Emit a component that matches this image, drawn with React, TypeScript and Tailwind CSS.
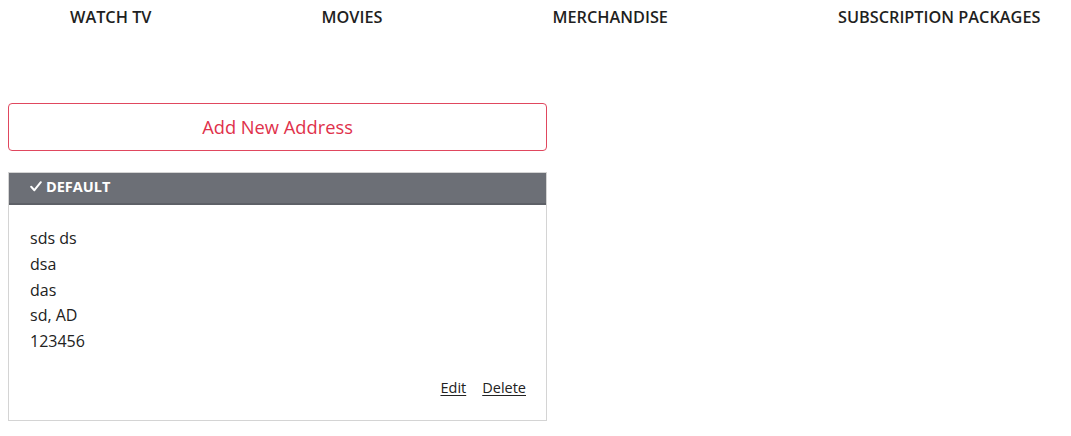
import React from "react";

export default function App() {
  const font = { fontFamily: '"Open Sans", "Noto Sans", sans-serif' };
  return (
    <div className="w-[1071px] h-[436px] bg-white text-[#222]" style={font}>
      <nav className="flex items-center h-[35px] pl-[70px] gap-[170px] text-[16.3px] font-semibold text-[#1f1f22]">
        <span>WATCH TV</span>
        <span>MOVIES</span>
        <span>MERCHANDISE</span>
        <span>SUBSCRIPTION PACKAGES</span>
      </nav>
      <div className="ml-[8px] w-[539px] mt-[68px]">
        <button className="w-full h-[48px] border border-[#e0475e] rounded-[4px] text-[#e0314b] text-[18.3px] flex items-center justify-center">
          Add New Address
        </button>
        <div className="mt-[21px] border border-[#d4d4d4] h-[249px] flex flex-col">
          <div className="h-[32px] bg-[#6c6f76] border-b-2 border-[#5d6067] text-white text-[14.5px] font-bold flex items-center pl-[21px] pb-[2px]">
            <svg width="12" height="11" viewBox="0 0 12 11" className="mr-[4px] mb-[1px]">
              <path d="M1.2 5.8 L4.4 9.2 L10.8 1.2" fill="none" stroke="white" strokeWidth="2" strokeLinecap="round" strokeLinejoin="round" />
            </svg>
            DEFAULT
          </div>
          <div className="pl-[21px] pt-[21px] text-[16px] leading-[25.8px] text-[#222]">
            <div>sds ds</div>
            <div>dsa</div>
            <div>das</div>
            <div>sd, AD</div>
            <div>123456</div>
          </div>
          <div className="flex justify-end gap-[16px] pr-[20px] mt-[22px] text-[14.5px] text-[#222]">
            <span className="underline underline-offset-2">Edit</span>
            <span className="underline underline-offset-2">Delete</span>
          </div>
        </div>
      </div>
    </div>
  );
}
